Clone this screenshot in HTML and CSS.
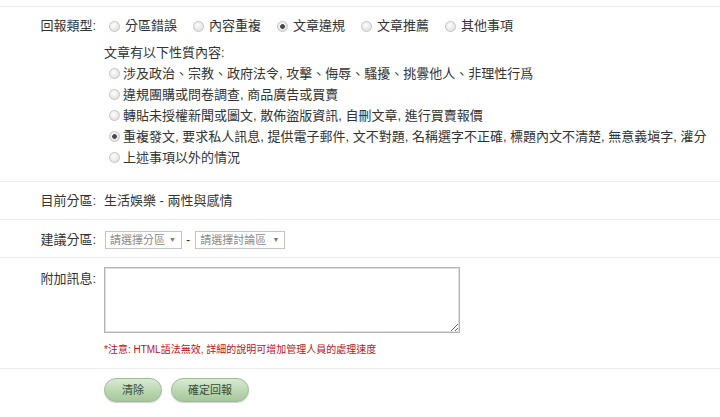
FILE: index.html
```html
<!DOCTYPE html>
<html lang="zh-Hant">
<head>
<meta charset="utf-8">
<title>回報</title>
<link rel="stylesheet" href="styles.css">
</head>
<body>
<form class="form">
  <div class="row row-type">
    <div class="label">回報類型:</div>
    <div class="content">
      <div class="types">
        <label class="opt"><input type="radio" name="type" class="radio"><span>分區錯誤</span></label>
        <label class="opt"><input type="radio" name="type" class="radio"><span>內容重複</span></label>
        <label class="opt"><input type="radio" name="type" class="radio" checked><span>文章違規</span></label>
        <label class="opt"><input type="radio" name="type" class="radio"><span>文章推薦</span></label>
        <label class="opt"><input type="radio" name="type" class="radio"><span>其他事項</span></label>
      </div>
      <div class="sub-title">文章有以下性質內容:</div>
      <div class="items">
        <label class="item"><input type="radio" name="reason" class="radio"><span>涉及政治、宗教、政府法令, 攻擊、侮辱、騷擾、挑釁他人、非理性行爲</span></label>
        <label class="item"><input type="radio" name="reason" class="radio"><span>違規團購或問卷調查, 商品廣告或買賣</span></label>
        <label class="item"><input type="radio" name="reason" class="radio"><span>轉貼未授權新聞或圖文, 散佈盜版資訊, 自刪文章, 進行買賣報價</span></label>
        <label class="item"><input type="radio" name="reason" class="radio" checked><span>重複發文, 要求私人訊息, 提供電子郵件, 文不對題, 名稱選字不正確, 標題內文不清楚, 無意義塡字, 灌分</span></label>
        <label class="item"><input type="radio" name="reason" class="radio"><span>上述事項以外的情況</span></label>
      </div>
    </div>
  </div>

  <div class="row row-current">
    <div class="label">目前分區:</div>
    <div class="content">生活娛樂 - 兩性與感情</div>
  </div>

  <div class="row row-suggest">
    <div class="label">建議分區:</div>
    <div class="content selects">
      <div class="select select-board"><span>請選擇分區</span><span class="arrow">▼</span></div>
      <span class="dash">-</span>
      <div class="select select-forum"><span>請選擇討論區</span><span class="arrow">▼</span></div>
    </div>
  </div>

  <div class="row row-msg">
    <div class="label label-msg">附加訊息:</div>
    <div class="content">
      <textarea class="textarea"></textarea>
      <div class="note">*注意: HTML語法無效, 詳細的說明可增加管理人員的處理速度</div>
    </div>
  </div>

  <div class="row row-actions">
    <div class="label"></div>
    <div class="content buttons">
      <button type="button" class="btn btn-clear">清除</button>
      <button type="button" class="btn btn-submit">確定回報</button>
    </div>
  </div>
</form>
</body>
</html>
```

FILE: styles.css
```css
html, body {
  margin: 0;
  padding: 0;
  background: #fff;
}

body {
  font-family: "Liberation Sans", "Noto Sans CJK TC", sans-serif;
  font-size: 13px;
  color: #333;
}

.form {
  margin-top: 6px;
}

.row {
  display: flex;
  border-top: 1px solid #ececec;
}

.label {
  width: 96px;
  flex: none;
  text-align: right;
  margin-right: 8px;
  white-space: nowrap;
}

.content {
  flex: 1;
  min-width: 0;
}

/* row 1 */
.row-type {
  padding: 9px 0 13px;
}
.row-type .label {
  line-height: 20px;
}
.types {
  display: flex;
  line-height: 20px;
}
.opt {
  display: flex;
  align-items: center;
  gap: 5px;
  margin-right: 11px;
  white-space: nowrap;
}
.opt .radio {
  margin-left: 5px;
}

.radio {
  -webkit-appearance: none;
  appearance: none;
  width: 11px;
  height: 11px;
  margin: 0;
  flex: none;
  border-radius: 50%;
  border: 1px solid #c4c4c4;
  background: radial-gradient(circle at 40% 35%, #fdfdfd 0, #e8e8e8 60%, #d6d6d6 100%);
  box-sizing: border-box;
}
.radio:checked {
  background:
    radial-gradient(circle, #4a4a4a 0, #4a4a4a 2px, rgba(74,74,74,0) 2.8px),
    radial-gradient(circle at 40% 35%, #fdfdfd 0, #e8e8e8 60%, #d6d6d6 100%);
}

.sub-title {
  margin-top: 7px;
  line-height: 20px;
}
.items {
  display: flex;
  flex-direction: column;
}
.item {
  display: flex;
  align-items: center;
  gap: 3px;
  line-height: 21px;
  white-space: nowrap;
}
.item .radio {
  margin-left: 5px;
}

/* row 2 */
.row-current {
  padding: 8px 0 8px;
  line-height: 21px;
}

/* row 3 */
.row-suggest {
  padding: 11px 0 8px;
  line-height: 18px;
}
.selects {
  display: flex;
  align-items: center;
}
.select {
  display: flex;
  align-items: center;
  justify-content: space-between;
  box-sizing: border-box;
  height: 18px;
  border: 1px solid #c4c4c4;
  padding: 0 5px 0 4px;
  font-size: 11px;
  color: #8a8a8a;
  background: #fff;
  margin-left: 1px;
}
.select-board {
  width: 77px;
}
.select-forum {
  width: 90px;
}
.arrow {
  font-size: 7px;
  color: #777;
}
.dash {
  margin: 0 4px;
  color: #333;
}

/* row 4 */
.row-msg {
  padding: 9px 0 10px;
}
.label-msg {
  line-height: 24px;
}
.textarea {
  display: block;
  box-sizing: border-box;
  width: 356px;
  height: 66px;
  margin: 0;
  border: 1px solid #b4b4b4;
  box-shadow: inset 0 0 0 1px #dedede;
  background: #fff;
  resize: both;
  font-family: inherit;
}
.note {
  margin-top: 9px;
  line-height: 16px;
  font-size: 10px;
  color: #b8141b;
}

/* row 5 */
.row-actions {
  padding: 9px 0 14px;
}
.buttons {
  display: flex;
  gap: 9px;
}
.btn {
  box-sizing: border-box;
  height: 24px;
  border-radius: 12px;
  border: 1px solid #9dbb95;
  background: linear-gradient(#d8ead2, #b8d5ae 60%, #a7c79d);
  box-shadow: 0 1px 1px rgba(0,0,0,0.18);
  font-family: "Liberation Sans", "Noto Sans CJK TC", sans-serif;
  font-size: 11px;
  color: #3a4a37;
  padding: 0;
  line-height: 22px;
}
.btn-clear {
  width: 58px;
}
.btn-submit {
  width: 78px;
}
```
